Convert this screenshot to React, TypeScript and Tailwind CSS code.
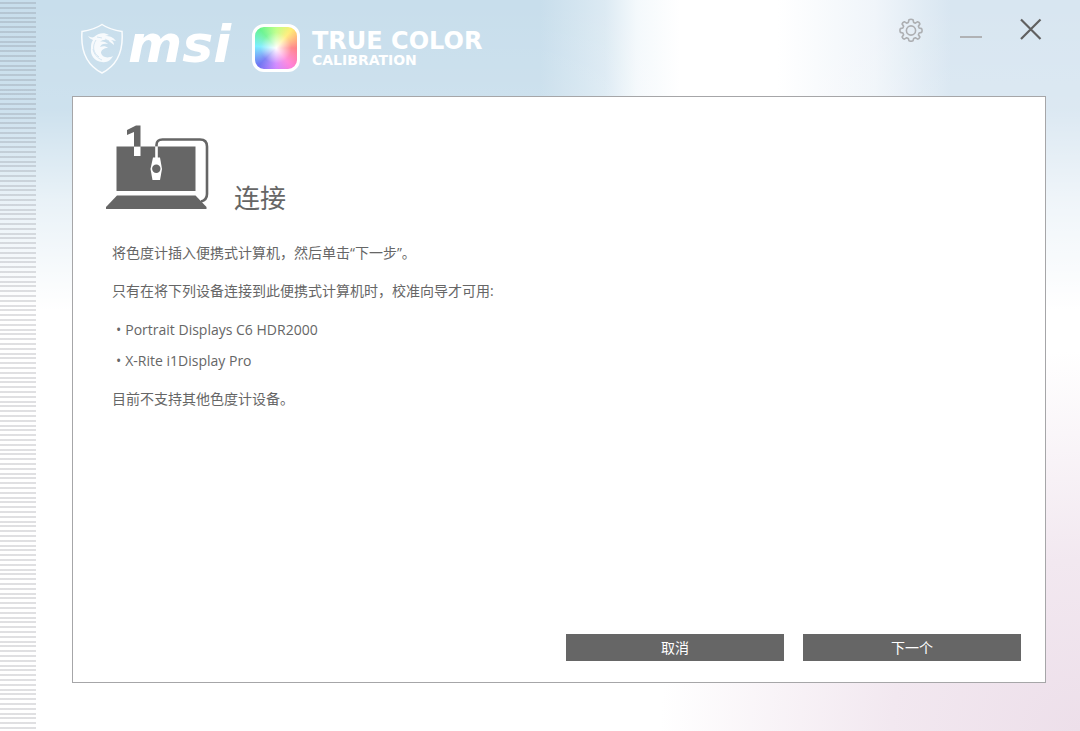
import React from "react";

function ShieldLogo() {
  return (
    <svg className="h-[52px] w-11 shrink-0" viewBox="0 0 44 52" fill="none" aria-hidden="true">
      <path
        d="M22 2.500C16 6.500 9 8.500 2 9.500C.5 29 6 43 22 51C38 43 43.500 29 42 9.500C35 8.500 28 6.500 22 2.500Z"
        stroke="#fff"
        strokeOpacity=".9"
        strokeWidth="1.5"
      />
      <path
        d="M8 14c2 1 4 2 6 1 4-4 10-5 15-2l-4 1c5 0 8 1 11 5l-5-1c2 1 3 3 3 5l-4-3c-3-3-7-3-10 0 3-1 6 0 8 2-4-1-7 0-8 3 3-1 6-1 8 1-4 0-7 2-7 5 1 4 6 6 12 3-2 4-6 7-11 6-8-1-12-7-11-14 0-3 0-5 2-8-2-1-4-2-5-4Z"
        fill="#fff"
        fillOpacity=".85"
      />
      <path d="M16 18c-4 6-3 13 3 17M13 27c1 5 4 9 9 11M17 15l5 1M25 17l4 2" stroke="#cbe0ed" strokeWidth=".8" />
    </svg>
  );
}

function LaptopIcon() {
  return (
    <svg className="h-[86px] w-[104px] shrink-0" viewBox="0 0 104 86" fill="none" aria-hidden="true">
      <path d="M10.500 21.500H89.500V66H10.500Z" fill="#666" />
      <path d="M11 70.500H89.500L100.500 82V84H0V82Z" fill="#666" />
      <path d="M28 21.500H34.500V31H28Z" fill="#fff" />
      <path d="M28 21.500V7L21 10V5L30 .5H34.500V21.500Z" fill="#666" />
      <path d="M50.500 21.500V20Q50.500 14.500 56.500 14.500H94Q101 14.500 101 21.500V69Q101 75 95 76.500" stroke="#666" strokeWidth="2.600" />
      <path d="M50.500 21.500V35" stroke="#fff" strokeWidth="2.600" />
      <path d="M47 32.500H54L56 44L54 55H46.500L44.500 44Z" fill="#fff" />
      <circle cx="50.300" cy="43.800" r="4.200" fill="#666" />
    </svg>
  );
}

function GearIcon() {
  return (
    <svg className="size-6" viewBox="0 0 24 24" fill="none" stroke="#adafb2" strokeWidth="1.6" strokeLinejoin="round" aria-hidden="true">
      <path d="M10 1.800Q12 .8 14 1.800L14.700 4.500L16.400 5.200L18.700 3.700Q20.600 4.300 20.900 6L19.400 8.300L20.100 10L22.600 10.600Q23.600 12.500 22.600 14.400L20.100 15L19.400 16.700L20.900 19Q20.300 20.700 18.700 21.100L16.400 19.800L14.700 20.500L14 22.800Q12 23.700 10 22.800L9.300 20.500L7.600 19.800L5.300 21.100Q3.600 20.700 3.100 19L4.600 16.700L3.900 15L1.400 14.400Q.5 12.500 1.400 10.600L3.900 10L4.600 8.300L3.100 6Q3.500 4.300 5.300 3.700L7.600 5.200L9.300 4.500Z" />
      <circle cx="12" cy="12.500" r="4.600" />
    </svg>
  );
}

export default function App() {
  return (
    <div className="flex min-h-screen bg-[radial-gradient(ellipse_420px_380px_at_100%_100%,#eddfea_0%,#f2e8f0_45%,transparent_100%),linear-gradient(to_bottom,transparent_0px,#ffffff1a_110px,#ffffff99_200px,#ffffff_310px),linear-gradient(to_right,#c8deec_0%,#c8deec_50%,#dceaf3_56%,#f4f9fc_59%,#ffffff_63%,#ffffff_72%,#f0f5fa_81%,#d8e6f1_88%,#d8e6f1_100%)] font-['Open_Sans','Noto_Sans_CJK_SC',sans-serif] text-sm text-[#666]">
      <div className="w-9 shrink-0 bg-[repeating-linear-gradient(to_bottom,transparent_0px_2px,#70707a38_2px_4px,transparent_4px_7px,#70707a38_7px_9px,transparent_9px_12px,#70707a38_12px_14px,transparent_14px_17px,#70707a38_17px_19px,transparent_19px_21px,#70707a38_21px_23px,transparent_23px_24px)]" />
      <div className="flex min-w-0 flex-1 flex-col pr-[34px] pb-12 pl-9">
        <header className="flex h-24 items-start justify-between">
          <div className="flex items-center pt-[22px] pl-2 text-white">
            <ShieldLogo />
            <span className="ml-1 w-[120px] pb-2 font-['DejaVu_Sans'] text-[52px] leading-[44px] font-bold italic">msi</span>
            <span className="ml-1 size-12 shrink-0 rounded-xl border-[3px] border-white bg-[radial-gradient(circle,#ffffff_0%,#ffffffcc_12%,#ffffff4d_45%,#ffffff1a_100%),conic-gradient(#a8ff60,#ffe850_40deg,#ff5a60_90deg,#ff60d0_140deg,#c060ff_180deg,#4a50f0_225deg,#50e8ff_275deg,#40f070_320deg,#a8ff60)] bg-origin-border" />
            <h1 className="ml-3 font-['DejaVu_Sans'] font-bold whitespace-nowrap">
              <span className="block text-2xl leading-6">TRUE COLOR</span>
              <span className="block text-sm leading-[14px]">CALIBRATION</span>
            </h1>
          </div>
          <div className="flex items-center gap-9 pt-[18px] pr-[3px]">
            <button type="button" aria-label="设置" className="grid size-6 place-items-center">
              <GearIcon />
            </button>
            <button type="button" aria-label="最小化" className="flex size-6 items-end justify-center pb-1">
              <span className="h-0.5 w-[22px] bg-[#b0b2b5]" />
            </button>
            <button type="button" aria-label="关闭" className="grid size-6 place-items-center">
              <svg className="size-6" viewBox="0 0 24 24" stroke="#606060" strokeWidth="2.200" aria-hidden="true">
                <path d="M2 1.500L21.500 21M21.500 1.500L2 21" />
              </svg>
            </button>
          </div>
        </header>
        <main className="flex flex-1 flex-col border border-[#a6a6a8] bg-white pt-7 pr-6 pb-[21px] pl-[33px]">
          <div className="flex items-end gap-6">
            <LaptopIcon />
            <h2 className="text-[26px] leading-[26px]">连接</h2>
          </div>
          <div className="mt-8 ml-1.5 leading-5">
            <p>将色度计插入便携式计算机，然后单击“下一步”。</p>
            <p className="mt-[18px]">只有在将下列设备连接到此便携式计算机时，校准向导才可用:</p>
            <ul className="mt-[19px] ml-1">
              <li className="flex gap-1">
                <span aria-hidden="true">•</span>Portrait Displays C6 HDR2000
              </li>
              <li className="mt-[11px] flex gap-1">
                <span aria-hidden="true">•</span>X-Rite i1Display Pro
              </li>
            </ul>
            <p className="mt-[18px]">目前不支持其他色度计设备。</p>
          </div>
          <div className="mt-auto flex justify-end gap-[19px] text-white">
            <button type="button" className="h-[27px] w-[218px] bg-[#666] leading-[27px]">取消</button>
            <button type="button" className="h-[27px] w-[218px] bg-[#666] leading-[27px]">下一个</button>
          </div>
        </main>
      </div>
    </div>
  );
}
